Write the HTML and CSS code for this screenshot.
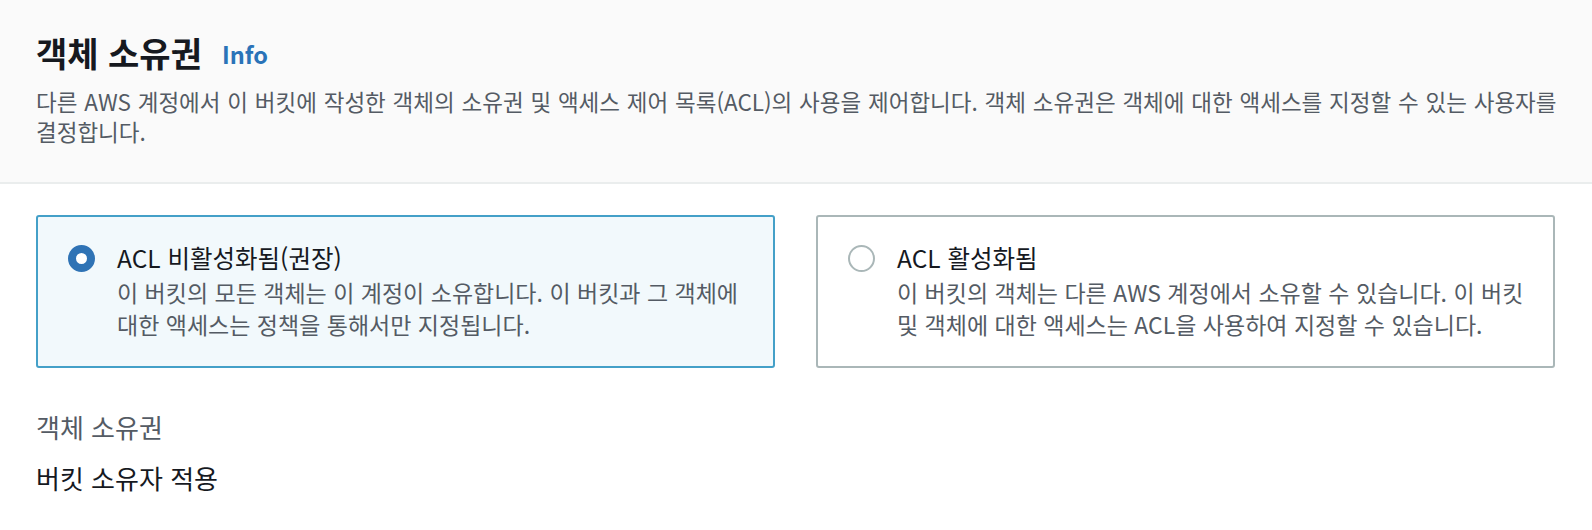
FILE: index.html
```html
<!DOCTYPE html>
<html lang="ko">
<head>
<meta charset="utf-8">
<link rel="stylesheet" href="styles.css">
</head>
<body>
<div class="header">
  <div class="title-row">
    <h2 class="title">객체 소유권</h2>
    <a class="info">Info</a>
  </div>
  <p class="desc">다른 AWS 계정에서 이 버킷에 작성한 객체의 소유권 및 액세스 제어 목록(ACL)의 사용을 제어합니다. 객체 소유권은 객체에 대한 액세스를 지정할 수 있는 사용자를 결정합니다.</p>
</div>
<div class="content">
  <div class="tiles">
    <div class="tile selected">
      <div class="tile-head">
        <span class="radio checked"></span>
        <span class="tile-title">ACL 비활성화됨(권장)</span>
      </div>
      <p class="tile-desc">이 버킷의 모든 객체는 이 계정이 소유합니다. 이 버킷과 그 객체에 대한 액세스는 정책을 통해서만 지정됩니다.</p>
    </div>
    <div class="tile">
      <div class="tile-head">
        <span class="radio"></span>
        <span class="tile-title">ACL 활성화됨</span>
      </div>
      <p class="tile-desc">이 버킷의 객체는 다른 AWS 계정에서 소유할 수 있습니다. 이 버킷 및 객체에 대한 액세스는 ACL을 사용하여 지정할 수 있습니다.</p>
    </div>
  </div>
  <div class="field">
    <div class="field-label">객체 소유권</div>
    <div class="field-value">버킷 소유자 적용</div>
  </div>
</div>
</body>
</html>
```

FILE: styles.css
```css
* { box-sizing: border-box; }
body {
  margin: 0;
  background: #ffffff;
  font-family: "Noto Sans CJK KR", "Noto Sans", sans-serif;
  color: #16191f;
  word-break: keep-all;
}
.header {
  background: #fafafa;
  border-bottom: 2px solid #eaeded;
  padding: 33px 20px 36px 36px;
}
.title-row {
  display: flex;
  align-items: center;
  gap: 20px;
  height: 40px;
}
.title {
  margin: 0;
  font-size: 34px;
  line-height: 40px;
  font-weight: 700;
  color: #16191f;
}
.info {
  font-size: 23.5px;
  font-weight: 700;
  color: #2a73b8;
  line-height: 40px;
  padding-top: 2px;
}
.desc {
  margin: 13px 0 0 0;
  font-size: 22.5px;
  line-height: 30px;
  word-spacing: 0.5px;
  color: #545b64;
}
.content {
  padding: 31px 37px 0 36px;
}
.tiles {
  display: grid;
  grid-template-columns: 1fr 1fr;
  gap: 41px;
}
.tile {
  border: 2px solid #aab7b8;
  border-radius: 3px;
  padding: 26px 22px 26px 30px;
  background: #ffffff;
}
.tile.selected {
  border-color: #44a0c8;
  background: #f2f9fc;
}
.tile-head {
  display: flex;
  align-items: center;
  gap: 22px;
  height: 30px;
}
.radio {
  width: 27px;
  height: 27px;
  border-radius: 50%;
  border: 2px solid #aab7b8;
  background: #ffffff;
  flex: none;
}
.radio.checked {
  border: 8px solid #2f73b5;
  background: #ffffff;
}
.tile-title {
  font-size: 24.5px;
  line-height: 30px;
  color: #16191f;
}
.tile-desc {
  margin: 3px 0 0 49px;
  font-size: 23px;
  line-height: 32px;
  color: #545b64;
}
.field {
  margin-top: 44px;
}
.field-label {
  font-size: 26px;
  line-height: 30px;
  color: #545b64;
}
.field-value {
  margin-top: 21px;
  font-size: 26px;
  line-height: 30px;
  color: #16191f;
}
```
